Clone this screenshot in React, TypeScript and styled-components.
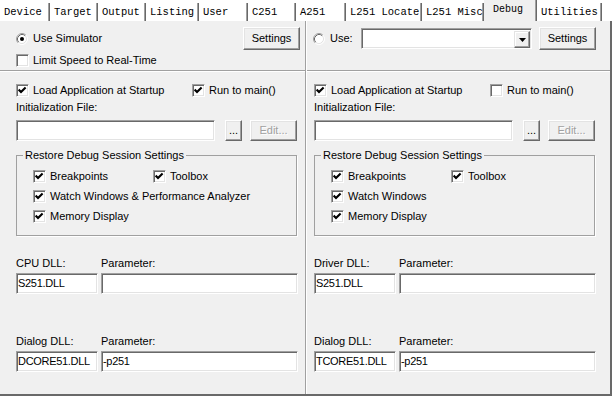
import styled, { createGlobalStyle } from 'styled-components';

const GlobalStyle = createGlobalStyle`
  * { box-sizing: border-box; }
  body { margin: 0; background: #fff; }
`;

const Dialog = styled.div`
  width: 612px;
  height: 396px;
  display: flex;
  flex-direction: column;
  font-family: "Liberation Sans", Arial, sans-serif;
  font-size: 11px;
  line-height: 13px;
  color: #000;
  overflow: hidden;
`;

const TabStrip = styled.div`
  display: flex;
  align-items: flex-end;
  height: 21px;
  flex: none;
  background: #fff;
`;

const Tab = styled.div<{ $w: number; $active?: boolean }>`
  width: ${p => p.$w}px;
  height: ${p => (p.$active ? 21 : 18)}px;
  padding: ${p => (p.$active ? '3px 0 0 9px' : '2px 0 0 4px')};
  font-family: "Liberation Mono", "DejaVu Sans Mono", monospace;
  font-size: ${p => (p.$active ? 10 : 10.5)}px;
  line-height: 14px;
  white-space: pre;
  background: ${p => (p.$active ? '#f0f0f0' : '#fff')};
  border-right: 1px solid #696969;
  box-shadow: inset -1px 0 0 #a0a0a0;
`;

const Panel = styled.div`
  flex: 1;
  display: flex;
  background: #f0f0f0;
  border-right: 2px solid #696969;
  border-bottom: 2px solid #696969;
`;

const Half = styled.div<{ $first?: boolean }>`
  display: flex;
  flex-direction: column;
  width: ${p => (p.$first ? '306px' : 'auto')};
  flex: ${p => (p.$first ? 'none' : '1')};
  border-right: ${p => (p.$first ? '1px solid #a0a0a0' : 'none')};
  border-left: ${p => (p.$first ? 'none' : '1px solid #fff')};
`;

const TopSection = styled.div<{ $pl: number; $pr: number }>`
  height: 50px;
  padding: 6px ${p => p.$pr}px 0 ${p => p.$pl}px;
  display: flex;
  flex-direction: column;
  gap: 3px;
  border-bottom: 1px solid #a0a0a0;
  box-shadow: 0 1px 0 #fff;
`;

const BottomSection = styled.div<{ $pl: number }>`
  padding: 12px 0 0 ${p => p.$pl}px;
  display: flex;
  flex-direction: column;
`;

const Row = styled.div<{ $h?: number; $mt?: number }>`
  display: flex;
  align-items: center;
  height: ${p => p.$h ?? 14}px;
  margin-top: ${p => p.$mt ?? 0}px;
`;

const Text = styled.div<{ $mt?: number }>`
  height: 13px;
  margin-top: ${p => p.$mt ?? 0}px;
  white-space: nowrap;
`;

const CheckLabel = styled.label<{ $w?: number }>`
  display: flex;
  align-items: center;
  gap: 4px;
  height: 14px;
  white-space: nowrap;
  width: ${p => (p.$w ? `${p.$w}px` : 'auto')};
  flex: none;
`;

const CheckBox = styled.span`
  width: 13px;
  height: 13px;
  flex: none;
  display: flex;
  align-items: center;
  justify-content: center;
  background: #fff;
  border: 1px solid;
  border-color: #a0a0a0 #fff #fff #a0a0a0;
  box-shadow: inset 1px 1px 0 #696969, inset -1px -1px 0 #e3e3e3;
`;

const RadioLabel = styled.label`
  display: flex;
  align-items: center;
  gap: 5px;
  white-space: nowrap;
`;

const Button = styled.div<{ $w: number; $ml?: number; $disabled?: boolean }>`
  width: ${p => p.$w}px;
  height: ${p => (p.$disabled !== undefined ? 21 : 23)}px;
  margin-left: ${p => (p.$ml === undefined ? 'auto' : `${p.$ml}px`)};
  flex: none;
  display: flex;
  align-items: center;
  justify-content: center;
  background: #f0f0f0;
  border: 1px solid;
  border-color: #fff #696969 #696969 #fff;
  box-shadow: inset -1px -1px 0 #a0a0a0, inset 1px 1px 0 #e3e3e3;
  color: ${p => (p.$disabled ? '#a0a0a0' : '#000')};
  text-shadow: ${p => (p.$disabled ? '1px 1px 0 #fff' : 'none')};
`;

const Field = styled.div<{ $w?: number }>`
  width: ${p => (p.$w ? `${p.$w}px` : 'auto')};
  height: 21px;
  flex: none;
  padding: 3px 0 0 1px;
  background: #fff;
  border: 1px solid;
  border-color: #a0a0a0 #fff #fff #a0a0a0;
  box-shadow: inset 1px 1px 0 #696969, inset -1px -1px 0 #e3e3e3;
  white-space: nowrap;
  letter-spacing: -0.3px;
`;

const Combo = styled.div`
  width: 171px;
  height: 21px;
  margin-left: auto;
  display: flex;
  justify-content: flex-end;
  padding: 1px;
  background: #fff;
  border: 1px solid;
  border-color: #a0a0a0 #fff #fff #a0a0a0;
  box-shadow: inset 1px 1px 0 #696969, inset -1px -1px 0 #e3e3e3;
`;

const ComboArrow = styled.div`
  width: 16px;
  height: 17px;
  margin-top: 1px;
  display: flex;
  align-items: center;
  justify-content: center;
  background: #f0f0f0;
  border: 1px solid;
  border-color: #e3e3e3 #696969 #696969 #e3e3e3;
  box-shadow: inset -1px -1px 0 #a0a0a0, inset 1px 1px 0 #fff;
`;

const Group = styled.fieldset`
  width: 281px;
  margin: 8px 0 0 0;
  padding: 7px 0 12px 0;
  min-inline-size: 0;
  border: 1px solid #a0a0a0;
  box-shadow: 1px 1px 0 #fff;
`;

const Legend = styled.legend`
  margin-left: 6px;
  padding: 0 2px;
  height: 13px;
  line-height: 13px;
`;

const GroupBody = styled.div`
  display: flex;
  flex-direction: column;
  gap: 6px;
  padding-left: 16px;
`;

const DllGrid = styled.div<{ $mt: number }>`
  display: grid;
  grid-template-columns: 82px 197px;
  grid-template-rows: 13px 21px;
  column-gap: 3px;
  row-gap: 3px;
  margin-top: ${p => p.$mt}px;
`;

const tabs = [
  { label: 'Device', w: 50 },
  { label: 'Target', w: 48 },
  { label: 'Output', w: 48 },
  { label: 'Listing', w: 53 },
  { label: 'User', w: 49 },
  { label: 'C251', w: 48 },
  { label: 'A251', w: 50 },
  { label: 'L251 Locate', w: 76 },
  { label: 'L251 Misc', w: 62 },
  { label: 'Debug', w: 53, active: true },
  { label: 'Utilities', w: 65 },
];

function Check({ checked, w, children }: { checked?: boolean; w?: number; children: string }) {
  return (
    <CheckLabel $w={w}>
      <CheckBox>
        {checked && (
          <svg width="9" height="9" viewBox="0 0 9 9">
            <path d="M0.6 3.6 L3 6 L7.6 1.4" fill="none" stroke="#000" strokeWidth="2.1" />
          </svg>
        )}
      </CheckBox>
      {children}
    </CheckLabel>
  );
}

function Radio({ selected, children }: { selected?: boolean; children: string }) {
  return (
    <RadioLabel>
      <svg width="12" height="12" viewBox="0 0 12 12">
        <circle cx="6" cy="6" r="5" fill="#fff" />
        <path d="M2.11 9.89 A5.5 5.5 0 0 1 9.89 2.11" fill="none" stroke="#a0a0a0" />
        <path d="M9.89 2.11 A5.5 5.5 0 0 1 2.11 9.89" fill="none" stroke="#fff" />
        <path d="M2.82 9.18 A4.5 4.5 0 0 1 9.18 2.82" fill="none" stroke="#696969" />
        <path d="M9.18 2.82 A4.5 4.5 0 0 1 2.82 9.18" fill="none" stroke="#e3e3e3" />
        {selected && <circle cx="6" cy="6" r="2" fill="#000" />}
      </svg>
      {children}
    </RadioLabel>
  );
}

function DebugHalf({
  first,
  pl,
  runToMain,
  watchLabel,
  driverLabel,
  dialogDll,
}: {
  first?: boolean;
  pl: number;
  runToMain: boolean;
  watchLabel: string;
  driverLabel: string;
  dialogDll: string;
}) {
  return (
    <Half $first={first}>
      {first ? (
        <TopSection $pl={pl} $pr={5}>
          <Row $h={23}>
            <Radio selected>Use Simulator</Radio>
            <Button $w={57}>Settings</Button>
          </Row>
          <Row>
            <Check>Limit Speed to Real-Time</Check>
          </Row>
        </TopSection>
      ) : (
        <TopSection $pl={pl - 1} $pr={14}>
          <Row $h={23}>
            <Radio>Use:</Radio>
            <Combo>
              <ComboArrow>
                <svg width="7" height="4" viewBox="0 0 7 4">
                  <path d="M0 0 H7 L3.5 4 Z" fill="#000" />
                </svg>
              </ComboArrow>
            </Combo>
            <Button $w={57} $ml={7}>Settings</Button>
          </Row>
        </TopSection>
      )}
      <BottomSection $pl={pl}>
        <Row>
          <Check checked w={176}>Load Application at Startup</Check>
          <Check checked={runToMain}>Run to main()</Check>
        </Row>
        <Text $mt={4}>Initialization File:</Text>
        <Row $h={21} $mt={6}>
          <Field $w={199} />
          <Button $w={17} $ml={10} $disabled={false}>...</Button>
          <Button $w={47} $ml={8} $disabled>Edit...</Button>
        </Row>
        <Group>
          <Legend>Restore Debug Session Settings</Legend>
          <GroupBody>
            <Row>
              <Check checked w={120}>Breakpoints</Check>
              <Check checked>Toolbox</Check>
            </Row>
            <Row>
              <Check checked>{watchLabel}</Check>
            </Row>
            <Row>
              <Check checked>Memory Display</Check>
            </Row>
          </GroupBody>
        </Group>
        <DllGrid $mt={21}>
          <Text>{driverLabel}</Text>
          <Text>Parameter:</Text>
          <Field>S251.DLL</Field>
          <Field />
        </DllGrid>
        <DllGrid $mt={41}>
          <Text>Dialog DLL:</Text>
          <Text>Parameter:</Text>
          <Field>{dialogDll}</Field>
          <Field>-p251</Field>
        </DllGrid>
      </BottomSection>
    </Half>
  );
}

export default function App() {
  return (
    <>
      <GlobalStyle />
      <Dialog>
        <TabStrip>
          {tabs.map(t => (
            <Tab key={t.label} $w={t.w} $active={t.active}>
              {t.label}
            </Tab>
          ))}
        </TabStrip>
        <Panel>
          <DebugHalf
            first
            pl={16}
            runToMain
            watchLabel="Watch Windows & Performance Analyzer"
            driverLabel="CPU DLL:"
            dialogDll="DCORE51.DLL"
          />
          <DebugHalf
            pl={7}
            runToMain={false}
            watchLabel="Watch Windows"
            driverLabel="Driver DLL:"
            dialogDll="TCORE51.DLL"
          />
        </Panel>
      </Dialog>
    </>
  );
}
